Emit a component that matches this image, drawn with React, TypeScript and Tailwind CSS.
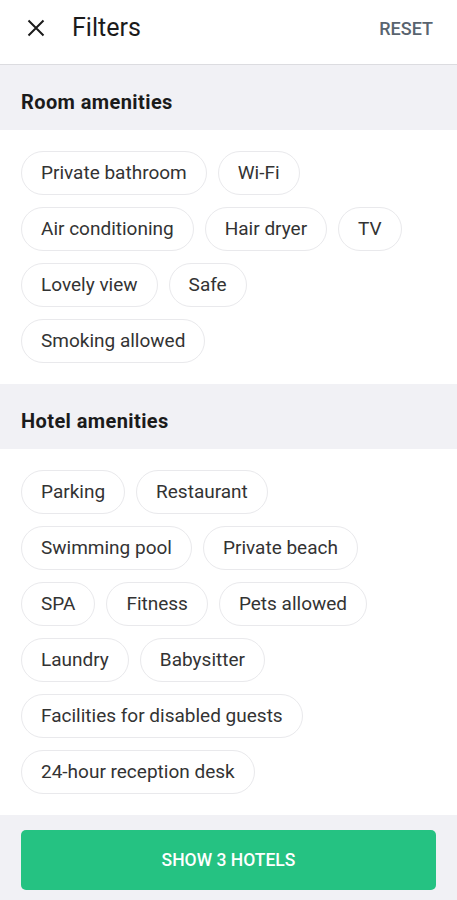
import { FC } from "react";

const roomAmenities = [
  "Private bathroom",
  "Wi-Fi",
  "Air conditioning",
  "Hair dryer",
  "TV",
  "Lovely view",
  "Safe",
  "Smoking allowed",
];

const hotelAmenities = [
  "Parking",
  "Restaurant",
  "Swimming pool",
  "Private beach",
  "SPA",
  "Fitness",
  "Pets allowed",
  "Laundry",
  "Babysitter",
  "Facilities for disabled guests",
  "24-hour reception desk",
];

const Chip: FC<{ label: string }> = ({ label }) => (
  <button className="flex h-[44px] items-center rounded-full border border-[#e9e9ec] bg-white px-[19px] text-[19px] text-[#333333]">
    {label}
  </button>
);

const Section: FC<{ title: string; items: string[] }> = ({ title, items }) => (
  <section>
    {/* Section title */}
    <div className="flex h-[65px] items-center bg-[#f1f1f5] px-[21px] pt-[9px]">
      <h2 className="text-[20px] font-bold tracking-[0.4px] text-[#1b1b1b]">
        {title}
      </h2>
    </div>
    <div className="flex flex-wrap gap-x-[11px] gap-y-[12px] px-[21px] py-[21px]">
      {items.map((item) => (
        <Chip key={item} label={item} />
      ))}
    </div>
  </section>
);

const App: FC = () => {
  return (
    <div
      className="flex h-[900px] w-full flex-col overflow-hidden bg-white"
      style={{ fontFamily: "Roboto, 'Liberation Sans', sans-serif" }}
    >
      {/* Header */}
      <header className="flex h-[65px] shrink-0 items-center justify-between border-b border-[#dcdce0] pb-[8px] pl-[27px] pr-[24px]">
        <div className="flex items-center gap-[27px]">
          <svg width="18" height="18" viewBox="0 0 18 18" fill="none">
            <path
              d="M1.5 1.5L16.5 16.5M16.5 1.5L1.5 16.5"
              stroke="#1b1b1b"
              strokeWidth="2"
            />
          </svg>
          <h1 className="text-[25px] text-[#1b1b1b]">Filters</h1>
        </div>
        <button className="text-[18px] font-medium text-[#59646f]">RESET</button>
      </header>

      <div className="flex-1 overflow-hidden">
        <Section title="Room amenities" items={roomAmenities} />
        <Section title="Hotel amenities" items={hotelAmenities} />
      </div>

      {/* Footer */}
      <div className="shrink-0 bg-[#f1f1f5] px-[21px] pt-[15px] pb-[10px]">
        <button className="flex h-[60px] w-full items-center justify-center rounded-[5px] bg-[#25c282] text-[17.5px] font-medium text-white">
          SHOW 3 HOTELS
        </button>
      </div>
    </div>
  );
};

export default App;
